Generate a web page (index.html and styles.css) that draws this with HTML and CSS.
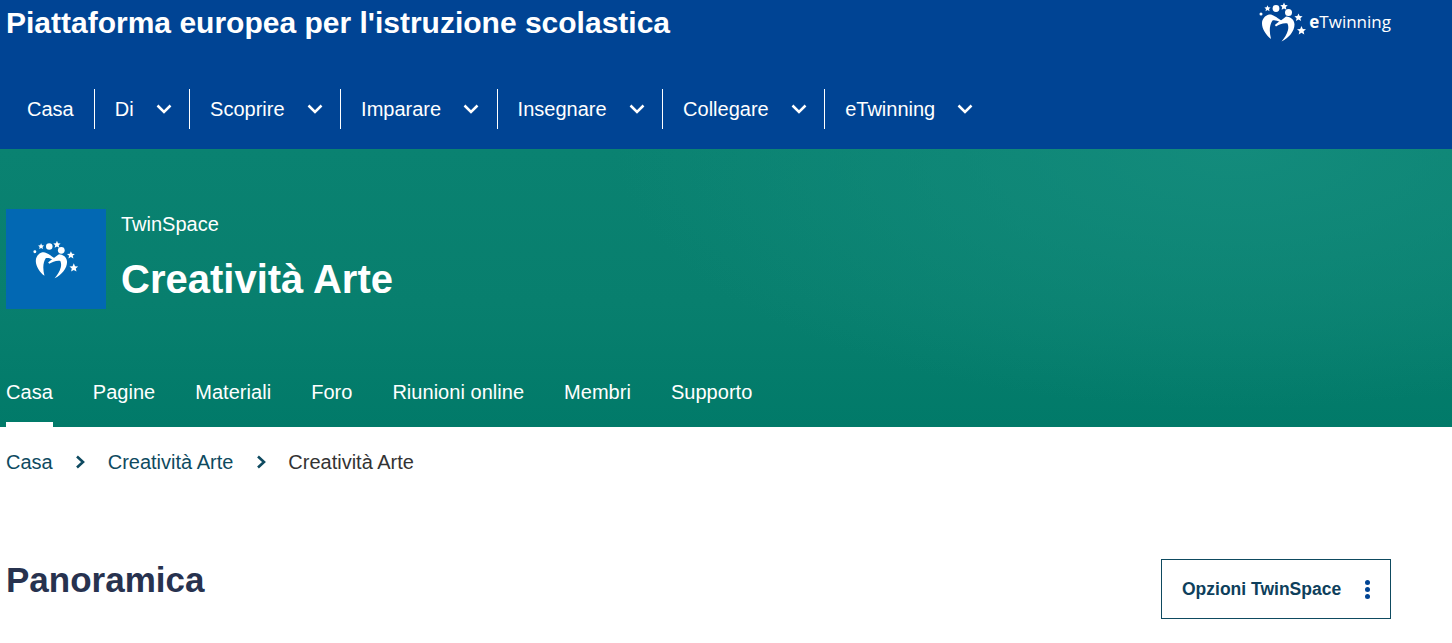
FILE: index.html
```html
<!DOCTYPE html>
<html lang="it">
<head>
    <meta charset="UTF-8">
    <meta name="viewport" content="width=device-width, initial-scale=1.0">
    <title>Creatività Arte</title>
    <link rel="stylesheet" href="styles.css">
</head>
<body>
    <svg class="sprites" width="0" height="0">
      <symbol id="logo" viewBox="2 0 52 44">
        <circle cx="6" cy="14" r="1.5"/>
        <polygon points="12.5,5.2 13.4,7.3 15.6,7.5 14,9 14.5,11.2 12.5,10 10.5,11.2 11,9 9.4,7.5 11.6,7.3"/>
        <circle cx="21" cy="8.5" r="3.4"/>
        <polygon points="29,2.6 30.1,5.1 32.8,5.3 30.8,7.1 31.4,9.8 29,8.4 26.6,9.8 27.2,7.1 25.2,5.3 27.9,5.1"/>
        <circle cx="33.5" cy="12.5" r="3.5"/>
        <polygon points="43.5,13.4 44.7,16 47.6,16.3 45.4,18.2 46.1,21 43.5,19.5 40.9,21 41.6,18.2 39.4,16.3 42.3,16"/>
        <polygon points="46.5,26 47.8,28.9 51,29.2 48.6,31.3 49.3,34.4 46.5,32.8 43.7,34.4 44.4,31.3 42,29.2 45.2,28.9"/>
        <path d="M14 14.5 C17 14 20 16 27 21 L26 22.5 C22 20.5 19.5 20 17.5 20.5 C14.5 25 14 31 16 39 C11 35 7 29 7 23.5 C7 19 10 15.5 14 14.5 Z"/>
        <path d="M31 16.5 C36 16.8 39.5 20 39.5 24.5 C39.5 31 34 38 26.5 41.5 C29.5 38 32 34 33 30 C33.5 28 33.5 26 32.5 23.5 C28.5 22.8 24 24.5 21 26.5 L19.8 25 C24 21.5 28 19 31 16.5 Z"/>
      </symbol>
      <symbol id="chevron" viewBox="0 0 16 10">
        <path d="M1.5 1.5 L8 8 L14.5 1.5" fill="none" stroke="currentColor" stroke-width="2.5"/>
      </symbol>
      <symbol id="crumb" viewBox="0 0 10 14">
        <path d="M2 1.5 L8 7 L2 12.5" fill="none" stroke="currentColor" stroke-width="2.6"/>
      </symbol>
    </svg>

    <header class="site-header">
      <div class="site-top">
        <div class="site-name">Piattaforma europea per l'istruzione scolastica</div>
        <div class="site-logo">
          <svg class="site-logo-icon"><use href="#logo"/></svg>
          <span class="site-logo-text"><b>e</b>Twinning</span>
        </div>
      </div>
      <nav class="main-nav">
        <a class="main-link">Casa</a>
        <a class="main-link">Di<svg class="chevron"><use href="#chevron"/></svg></a>
        <a class="main-link">Scoprire<svg class="chevron"><use href="#chevron"/></svg></a>
        <a class="main-link">Imparare<svg class="chevron"><use href="#chevron"/></svg></a>
        <a class="main-link">Insegnare<svg class="chevron"><use href="#chevron"/></svg></a>
        <a class="main-link">Collegare<svg class="chevron"><use href="#chevron"/></svg></a>
        <a class="main-link">eTwinning<svg class="chevron"><use href="#chevron"/></svg></a>
      </nav>
    </header>

    <section class="hero">
      <div class="hero-head">
        <div class="hero-badge"><svg class="hero-badge-icon"><use href="#logo"/></svg></div>
        <div class="hero-text">
          <div class="hero-label">TwinSpace</div>
          <h1>Creatività Arte</h1>
        </div>
      </div>
      <nav class="tabs">
        <a class="tab tab-active">Casa</a>
        <a class="tab">Pagine</a>
        <a class="tab">Materiali</a>
        <a class="tab">Foro</a>
        <a class="tab">Riunioni online</a>
        <a class="tab">Membri</a>
        <a class="tab">Supporto</a>
      </nav>
    </section>

    <nav class="breadcrumb">
      <a>Casa</a>
      <svg class="crumb-sep"><use href="#crumb"/></svg>
      <a>Creatività Arte</a>
      <svg class="crumb-sep"><use href="#crumb"/></svg>
      <span>Creatività Arte</span>
    </nav>

    <main class="content-head">
      <h2>Panoramica</h2>
      <button class="options-btn" type="button">
        Opzioni TwinSpace
        <span class="dots"><i></i><i></i><i></i></span>
      </button>
    </main>
</body>
</html>
```

FILE: styles.css
```css
html, body {
  margin: 0;
  padding: 0;
  height: 643px;
  overflow: hidden;
}

body {
  font-family: "Liberation Sans", Arial, sans-serif;
  font-size: 20px;
  background-color: #fff;
  color: #262b38;
}

.sprites {
  display: block;
}

.site-header {
  height: 149px;
  background-color: #004494;
  color: #fff;
}

.site-top {
  display: flex;
  justify-content: space-between;
  height: 89px;
  padding: 0 61px 0 6px;
}

.site-name {
  font-size: 30px;
  font-weight: bold;
  line-height: 46px;
}

.site-logo {
  display: flex;
  align-items: flex-start;
}

.site-logo-icon {
  width: 52px;
  height: 44px;
  fill: #fff;
}

.site-logo-text {
  font-family: "Open Sans", sans-serif;
  font-size: 17px;
  line-height: 44px;
}

.main-nav {
  display: flex;
  padding-left: 6px;
}

.main-link {
  display: flex;
  align-items: center;
  height: 40px;
  padding: 0 17.5px 0 20px;
  border-right: 1px solid #fff;
}

.main-link:first-child {
  padding: 0 20px 0 21px;
}

.main-link:last-child {
  border-right: 0;
}

.chevron {
  width: 16px;
  height: 10px;
  margin-left: 22px;
}

.hero {
  height: 278px;
  background:
    radial-gradient(ellipse 620px 260px at 85% 0%, rgba(20, 140, 125, 0.9), rgba(20, 140, 125, 0)),
    linear-gradient(180deg, #0a8271 0%, #087f6e 55%, #017a69 100%);
  color: #fff;
  display: flex;
  flex-direction: column;
  justify-content: space-between;
}

.hero-head {
  display: flex;
  margin: 60px 0 0 6px;
}

.hero-badge {
  display: flex;
  align-items: center;
  justify-content: center;
  width: 100px;
  height: 100px;
  background-color: #0268b3;
}

.hero-badge-icon {
  width: 50px;
  height: 43px;
  fill: #fff;
}

.hero-text {
  margin-left: 15px;
  padding-top: 1px;
}

.hero-label {
  line-height: 28px;
}

h1 {
  margin: 16px 0 0;
  font-size: 40px;
  line-height: 50px;
}

.tabs {
  display: flex;
  gap: 40px;
  padding-left: 6px;
  letter-spacing: 0.03px;
}

.tab {
  height: 50px;
  line-height: 30px;
  box-sizing: border-box;
}

.tab-active {
  border-bottom: 5px solid #fff;
}

.breadcrumb {
  display: flex;
  align-items: center;
  padding: 21px 0 0 6px;
  line-height: 28px;
  color: #0e4a60;
}

.breadcrumb span {
  color: #333;
}

.crumb-sep {
  width: 10px;
  height: 14px;
  margin: 0 22.5px;
}

.content-head {
  display: flex;
  justify-content: space-between;
  align-items: flex-start;
  padding: 83px 61px 0 6px;
}

h2 {
  margin: 0;
  font-size: 35px;
  line-height: 42px;
  color: #27324f;
}

.options-btn {
  display: flex;
  align-items: center;
  justify-content: space-between;
  width: 230px;
  height: 60px;
  padding: 0 20px;
  background: #fff;
  border: 1px solid #0e4a60;
  font-family: inherit;
  font-size: 17.5px;
  font-weight: bold;
  color: #0e3f5c;
}

.dots {
  display: flex;
  flex-direction: column;
  gap: 2px;
}

.dots i {
  display: block;
  width: 5px;
  height: 5px;
  border-radius: 50%;
  background-color: #004494;
}
```
